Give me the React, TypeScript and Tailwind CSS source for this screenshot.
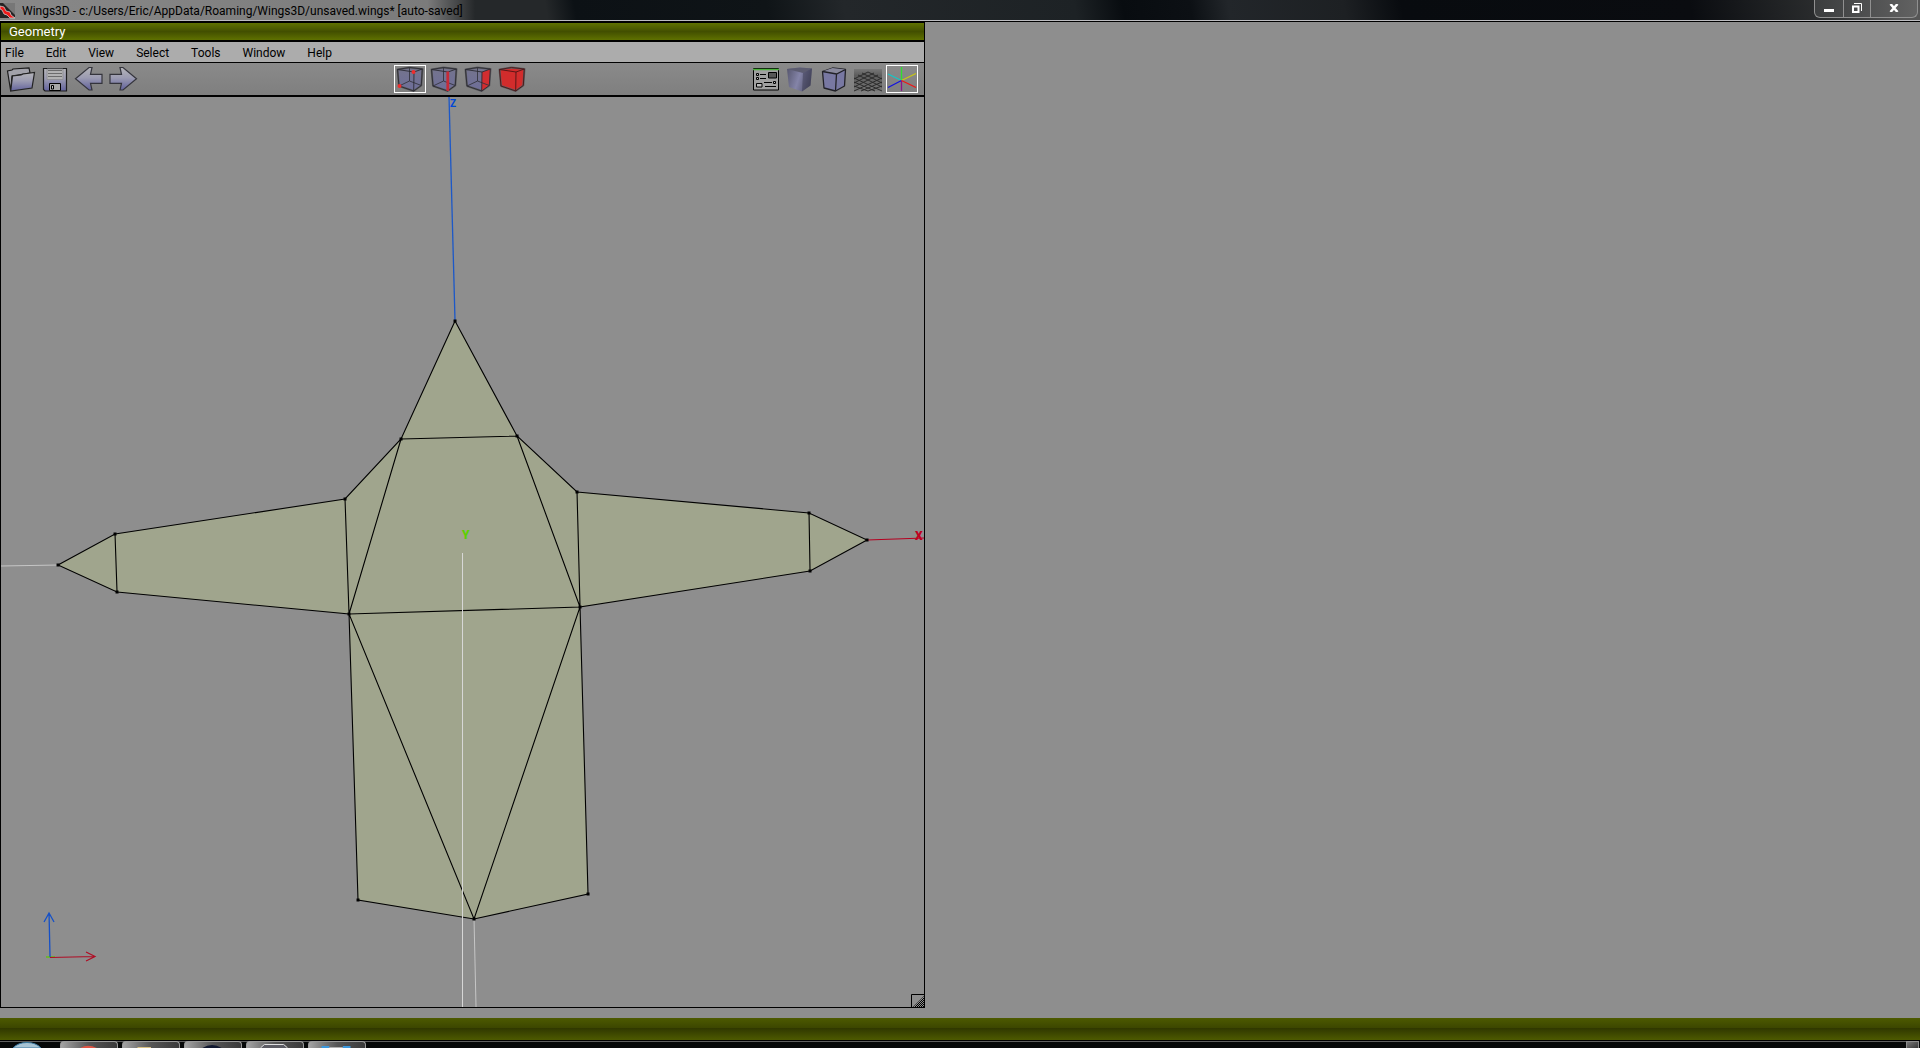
import React from "react";

const menus = ["File", "Edit", "View", "Select", "Tools", "Window", "Help"];

type IconProps = { children: React.ReactNode };

function Icon({ children }: IconProps) {
  return (
    <svg viewBox="0 0 32 28" className="h-7 w-8" aria-hidden="true">
      {children}
    </svg>
  );
}

function ToolButton({ label, active, children }: IconProps & { label: string; active?: boolean }) {
  return (
    <button
      type="button"
      aria-label={label}
      aria-pressed={active}
      className={active ? "h-7 w-8 outline outline-1 -outline-offset-1 outline-white" : "h-7 w-8"}
    >
      <Icon>{children}</Icon>
    </button>
  );
}

function WireCube({ mode }: { mode: "vertex" | "edge" | "face" | "body" }) {
  const body = mode === "body";
  return (
    <g strokeLinejoin="round">
      <path
        d="M3.5 4.5 15.5 2.5 28.5 4 27.3 20.5 19.7 26 5 21Z"
        fill={body ? "#d22c2c" : "url(#cubeFill)"}
        stroke="#5c5c60"
        strokeWidth="2"
      />
      {mode === "face" && <path d="M20 7 28.3 4 27.3 20.5 19.7 26Z" fill="#d12d31" />}
      {!body && (
        <path d="M15.5 2.5V16L5 21M15.5 16l11.8 4.5" fill="none" stroke="#34343e" strokeWidth="0.900" />
      )}
      <path
        d="M3.5 4.5 20 7 28.3 4M20 7 19.7 26M3.5 4.5 5 21 19.7 26 27.3 20.5 28.3 4 15.5 2.5Z"
        fill="none"
        stroke={body ? "#4c1414" : "#2a2a32"}
        strokeWidth="0.900"
      />
      {mode === "vertex" && (
        <>
          <circle cx="19.500" cy="7" r="2" fill="#f02c2c" />
          <circle cx="5.500" cy="21" r="2" fill="#f02c2c" />
        </>
      )}
      {mode === "edge" && <path d="M19.800 6.500V26" stroke="#c62b38" strokeWidth="2.800" />}
    </g>
  );
}

function Defs() {
  return (
    <svg className="absolute h-0 w-0" aria-hidden="true">
      <defs>
        <linearGradient id="cubeFill" x1="0" y1="0" x2="0" y2="1">
          <stop offset="0" stopColor="#74748c" />
          <stop offset="1" stopColor="#6e6e9a" />
        </linearGradient>
        <linearGradient id="metal" x1="0" y1="0" x2="0" y2="1">
          <stop offset="0" stopColor="#b4b4b8" />
          <stop offset="0.45" stopColor="#9c9cb2" />
          <stop offset="1" stopColor="#62629c" />
        </linearGradient>
        <linearGradient id="shade" x1="0" y1="0" x2="1" y2="0.3">
          <stop offset="0" stopColor="#55556c" />
          <stop offset="0.55" stopColor="#8484a8" />
          <stop offset="1" stopColor="#55556e" />
        </linearGradient>
        <linearGradient id="haze" x1="0" y1="0" x2="0" y2="1">
          <stop offset="0" stopColor="#777777" />
          <stop offset="0.3" stopColor="#5c5c5c" />
          <stop offset="1" stopColor="#747474" />
        </linearGradient>
        <pattern id="dither" width="2" height="2" patternUnits="userSpaceOnUse">
          <path d="M0 0h1v1H0zM1 1h1v1H1z" fill="#000" />
        </pattern>
      </defs>
    </svg>
  );
}

function Toolbar() {
  return (
    <div className="grid h-8 shrink-0 grid-cols-[1fr_auto_1fr] items-center bg-linear-to-b from-[#8a8a8a] to-[#7f7f7f] pr-1.5 pl-1">
      <div className="flex gap-0.5">
        <ToolButton label="Open">
          <path d="M5.700 26 2.500 6 7 5l1-1 16-1 1 5-18 3Z" fill="#a2a2aa" stroke="#1c1c1c" strokeWidth="1.200" />
          <path d="M7.500 11 16 10l2-1 11.500-1.500L27 23 5.700 26Z" fill="url(#metal)" stroke="#222" strokeWidth="1.200" />
        </ToolButton>
        <ToolButton label="Save">
          <path d="M4.500 3.500h23v22.500H6l-1.500-1.500Z" fill="url(#metal)" stroke="#1c1c1c" strokeWidth="1.200" />
          <path d="M8 4h16v10.500H8z" fill="#b2b2b2" stroke="#8c8c90" strokeWidth="0.800" />
          <path d="M9 5.500h14M9 8.500h14M9 11.500h14" stroke="#6c6c6c" />
          <path d="M10.500 18.500h11v7h-11z" fill="#a8a8a8" stroke="#000" />
          <path d="M12.500 20.500h2v3.500h-2z" fill="#c0c0c0" stroke="#000" />
        </ToolButton>
        <ToolButton label="Undo">
          <path d="M2.500 13.700 16 2.500h3L17.500 9.300H29v9H17.500L19 25h-3Z" fill="url(#metal)" stroke="#34343c" strokeWidth="1.200" />
        </ToolButton>
        <ToolButton label="Redo">
          <path d="M29.500 13.700 16 2.500h-3l1.500 6.800H3v9h11.500L13 25h3Z" fill="url(#metal)" stroke="#34343c" strokeWidth="1.200" />
        </ToolButton>
      </div>
      <div className="mr-0.5 flex gap-0.5">
        <ToolButton label="Vertex selection" active>
          <WireCube mode="vertex" />
        </ToolButton>
        <ToolButton label="Edge selection">
          <WireCube mode="edge" />
        </ToolButton>
        <ToolButton label="Face selection">
          <WireCube mode="face" />
        </ToolButton>
        <ToolButton label="Body selection">
          <WireCube mode="body" />
        </ToolButton>
      </div>
      <div className="flex justify-end gap-0.5">
        <ToolButton label="Preferences">
          <path d="M3.500 3.500h25v21.500h-25z" fill="#a0a0a0" stroke="#000" />
          <path d="M3 4.500h26" stroke="#4cb03c" strokeWidth="1.500" />
          <path d="M18.500 7.500h8v5.500h-8z" fill="#565656" stroke="#000" />
          <path d="M6.500 8.500h2v2h-2zM6.500 12.500h2v2h-2zM23.500 16.500h2v2h-2zM6.500 18.500h5.500v3.500H6.500z" fill="#bbb" stroke="#000" />
          <path d="M10 9.500h6M10 13.500h6M14 17.500h8M15 21.500h11" stroke="#000" />
        </ToolButton>
        <ToolButton label="Smooth shading">
          <path d="M3 4 16 2.500 28 3.500 26.500 20.500 18 26.500 5 22Z" fill="url(#shade)" />
          <path d="M3 4 16 2.500 28 3.500 19 8Z" fill="#5c5c70" />
          <path d="M19 8 28 3.500 26.500 20.500 18 26.500Z" fill="#33334a" opacity="0.45" />
        </ToolButton>
        <ToolButton label="Orthographic view">
          <path d="M4.500 6.500 14.500 3 27.500 4.500 26.500 21 17.500 26 6 23Z" fill="#7878a2" stroke="#222228" strokeWidth="1.300" strokeLinejoin="round" />
          <path d="M4.500 6.500 14.500 3 27.500 4.500 18.500 9Z" fill="#88889c" />
          <path d="M4.500 6.500 18.500 9 27.500 4.500M18.500 9l-1 17" fill="none" stroke="#222228" strokeWidth="1.300" />
        </ToolButton>
        <ToolButton label="Show ground plane">
          <path d="M2 4h28v22H2z" fill="url(#haze)" />
          <path
            d="M2 26 30 13M2 22 26 10M2 18 22 8M2 14 16 7M9 26 30 17M16 26 30 21M30 26 2 13M30 22 6 10M30 18 10 8M30 14 16 7M23 26 2 17M16 26 2 21"
            fill="none"
            stroke="#2b2b2b"
            strokeWidth="1"
          />
        </ToolButton>
        <ToolButton label="Show axes" active>
          <g strokeWidth="1.300">
            <path d="M15.500 15.500V2" stroke="#2ee02e" />
            <path d="M15.500 15.500V26" stroke="#8a148a" />
            <path d="M15.500 15.500 2 9" stroke="#12c8c8" />
            <path d="M15.500 15.500 30 8.500" stroke="#c8c812" />
            <path d="M15.500 15.500 2 22.500" stroke="#1212e0" />
            <path d="M15.500 15.500 30 22.500" stroke="#f01616" />
          </g>
        </ToolButton>
      </div>
    </div>
  );
}

const vertices: [number, number][] = [
  [455, 321], [401, 439], [517, 436], [345, 499], [577, 492], [349, 614], [580, 607],
  [358, 900], [588, 894], [474, 919], [115, 534], [58, 565], [117, 592], [809, 513],
  [867, 540], [810, 571],
];

/* World units of the drawing start at (1, 97), the viewport's top left corner. */
function Viewport() {
  return (
    <svg
      viewBox="1 97 923 910"
      preserveAspectRatio="xMidYMin meet"
      className="block h-full w-full"
      role="img"
      aria-label="Model seen from above"
    >
      <path d="M449 97 455 321" stroke="#1c58c8" strokeWidth="1.300" />
      <text x="450" y="107" fill="#0048d8" className="font-['Roboto'] text-[10px] font-bold">Z</text>
      <path d="M867 540 924 538" stroke="#b40020" strokeWidth="1.200" />
      <path d="M1 566 58 565M474 919 476 1007" stroke="#c6c6c6" />
      <path
        d="M455 321 517 436 577 492 809 513 867 540 810 571 580 607 588 894 474 919 358 900 349 614 117 592 58 565 115 534 345 499 401 439Z"
        fill="#a0a58d"
      />
      <path
        d="M455 321 517 436 577 492 809 513 867 540 810 571 580 607 588 894 474 919 358 900 349 614 117 592 58 565 115 534 345 499 401 439ZM401 439 517 436M401 439 349 614 580 607 517 436M345 499 349 614 474 919 580 607 577 492M115 534 117 592M809 513 810 571"
        fill="none"
        stroke="#000"
        strokeWidth="1.100"
      />
      {vertices.map(([x, y]) => (
        <rect key={`${x}-${y}`} x={x - 1.5} y={y - 1.5} width="3" height="3" />
      ))}
      <path d="M462.500 553V1007" stroke="#d8d8d8" />
      <text x="462" y="539" fill="#5cd000" className="font-['Roboto'] text-[12px] font-black">Y</text>
      <text x="915" y="540" fill="#c00020" className="font-['Roboto'] text-[12px] font-black">X</text>
      <path d="M46 957h9" stroke="#5cc800" strokeWidth="1.300" />
      <path d="M50 957 49 913M44 922l5-9 5 9" fill="none" stroke="#1450c8" strokeWidth="1.300" />
      <path d="M50 957.500 95 956.500M86 952l9 4.500-9 4.500" fill="none" stroke="#b00c24" strokeWidth="1.200" />
    </svg>
  );
}

function GeometryWindow() {
  return (
    <section className="mb-2.5 flex w-[48.18%] flex-col border border-black font-['Roboto',sans-serif]">
      <h1 className="h-[17px] shrink-0 bg-linear-to-b from-[#5f7100] via-[#424f00] to-[#5f7100] pl-2 text-[13px] leading-[17px] text-white">
        Geometry
      </h1>
      <nav className="flex h-[23px] shrink-0 gap-[22px] border-t-2 border-b border-black bg-[#acacac] pl-1 text-[12px] leading-[22px] text-black">
        {menus.map((m) => (
          <button key={m} type="button" className="h-5">
            {m}
          </button>
        ))}
      </nav>
      <Toolbar />
      <div className="relative min-h-0 flex-1 border-t-2 border-black">
        <Viewport />
        <svg viewBox="0 0 13 13" className="absolute right-0 bottom-0 size-[13px]" aria-hidden="true">
          <path d="M0.500 13V0.500H13" fill="none" stroke="#000" />
          <path d="M2 13 13 2V13Z" fill="url(#dither)" />
        </svg>
      </div>
    </section>
  );
}

function TitleBar() {
  return (
    <header className="flex h-[22px] shrink-0 justify-between border-b border-black bg-[linear-gradient(80deg,#25282a_0%,#25282a_28.500%,#0c1115_30%,#0f1417_40%,#23272a_44%,#1d2225_56%,#080c10_58.500%,#0c1014_62%,#22262a_64%,#1d2023_70%,#080b0f_73%,#0a0c10_88%,#2c2e2f_95%,#555_99%)]">
      <div className="flex h-[21px] flex-1 items-center border-b border-[#bcbcc0]">
        <div className="flex h-5 items-center bg-linear-to-r from-[#888] via-[#7b7b7b] via-90% to-transparent pr-3">
          <svg viewBox="0 0 16 16" className="mt-0.5 mr-1.5 size-4" aria-hidden="true">
            <path d="M0 0h15v15H0z" fill="#242424" />
            <path d="M3 0h12v12Z" fill="#777" />
            <path d="M0 3l4 1 2 4 4 1 1 3 4 3h-5l-3-3-3-1-2-4-2-1Z" fill="#f01c1c" stroke="#ddd" strokeWidth="0.700" />
          </svg>
          <span className="pt-0.5 font-['Roboto',sans-serif] text-[12px] leading-5 whitespace-nowrap text-black">
            Wings3D - c:/Users/Eric/AppData/Roaming/Wings3D/unsaved.wings* [auto-saved]
          </span>
        </div>
      </div>
      <div className="flex h-[21px] border-b border-[#bcbcc0] pr-0.5">
        <div className="flex h-[18px] divide-x divide-[#909090] rounded-b-md border border-t-0 border-[#909090] bg-linear-to-r from-[#3b3d3e] to-[#626262]">
          <button type="button" aria-label="Minimize" className="flex w-[29px] justify-center pt-[9px]">
            <span className="h-[3px] w-2.5 bg-white" />
          </button>
          <button type="button" aria-label="Restore" className="flex w-[27px] justify-center pt-[3px]">
            <svg viewBox="0 0 10 10" className="size-2.5">
              <path d="M1 3.500h5.500V9H1Z" fill="none" stroke="#fff" strokeWidth="2" />
              <path d="M2 0.500h7.500V8" fill="none" stroke="#fff" />
            </svg>
          </button>
          <button type="button" aria-label="Close" className="flex w-[46px] justify-center pt-1">
            <svg viewBox="0 0 10 8" className="h-2 w-2.5">
              <path d="M1.500 0 8.500 8M8.500 0 1.500 8" stroke="#fff" strokeWidth="2.500" />
            </svg>
          </button>
        </div>
      </div>
    </header>
  );
}

function TaskButton({ label, children }: { label: string; children: React.ReactNode }) {
  return (
    <button
      type="button"
      aria-label={label}
      className="flex h-[7px] w-[58px] justify-center overflow-hidden rounded-t-sm border-t border-x border-[#9a9a9a] bg-linear-to-r from-[#a4a4a4] via-[#565656] to-[#3a3a3a]"
    >
      <svg viewBox="0 0 58 6" className="h-1.5 w-14">
        {children}
      </svg>
    </button>
  );
}

function Taskbar() {
  return (
    <footer className="flex h-2 shrink-0 justify-between overflow-hidden border-t border-black bg-[#060808]">
      <div className="flex flex-1 gap-1 border-t border-[#606060]">
        <button type="button" aria-label="Start" className="mr-3 h-1.5 w-11 pl-3">
          <svg viewBox="0 0 30 6" className="h-1.5 w-[30px]">
            <path d="M1 6Q6 0.500 15 0.500T29 6Z" fill="#a8c4d4" stroke="#3878a0" />
          </svg>
        </button>
        <div className="-mt-px flex gap-1">
          <TaskButton label="Browser">
            <path d="M20 6Q28 1.500 37 6Z" fill="#e05444" />
          </TaskButton>
          <TaskButton label="Files">
            <path d="M15 5h14v1H15z" fill="#d8c080" />
          </TaskButton>
          <TaskButton label="Player">
            <path d="M18 6Q28 0 38 6Z" fill="#101830" />
          </TaskButton>
          <TaskButton label="Models">
            <path d="M14 6 18 2.500H38L42 6" fill="#5c5c64" stroke="#e8e8e8" />
          </TaskButton>
          <TaskButton label="Display">
            <path d="M13 4h8v2h-8zM35 4h8v2h-8z" fill="#3c98dc" />
            <path d="M21 5h14v1H21z" fill="#b0b0b0" />
          </TaskButton>
        </div>
      </div>
      <button
        type="button"
        aria-label="Show desktop"
        className="mr-px h-2 w-[13px] border border-b-0 border-[#8c8c8c] bg-linear-to-br from-[#777] to-[#333]"
      />
    </footer>
  );
}

export default function App() {
  return (
    <div className="flex h-screen flex-col overflow-hidden bg-[#8e8e8e]">
      <Defs />
      <TitleBar />
      <main className="flex min-h-0 flex-1">
        <GeometryWindow />
      </main>
      <div className="h-[22px] shrink-0 bg-[linear-gradient(#4d5a00,#3c4600_45%,#303800_47%,#4d5a00)]" />
      <Taskbar />
    </div>
  );
}
